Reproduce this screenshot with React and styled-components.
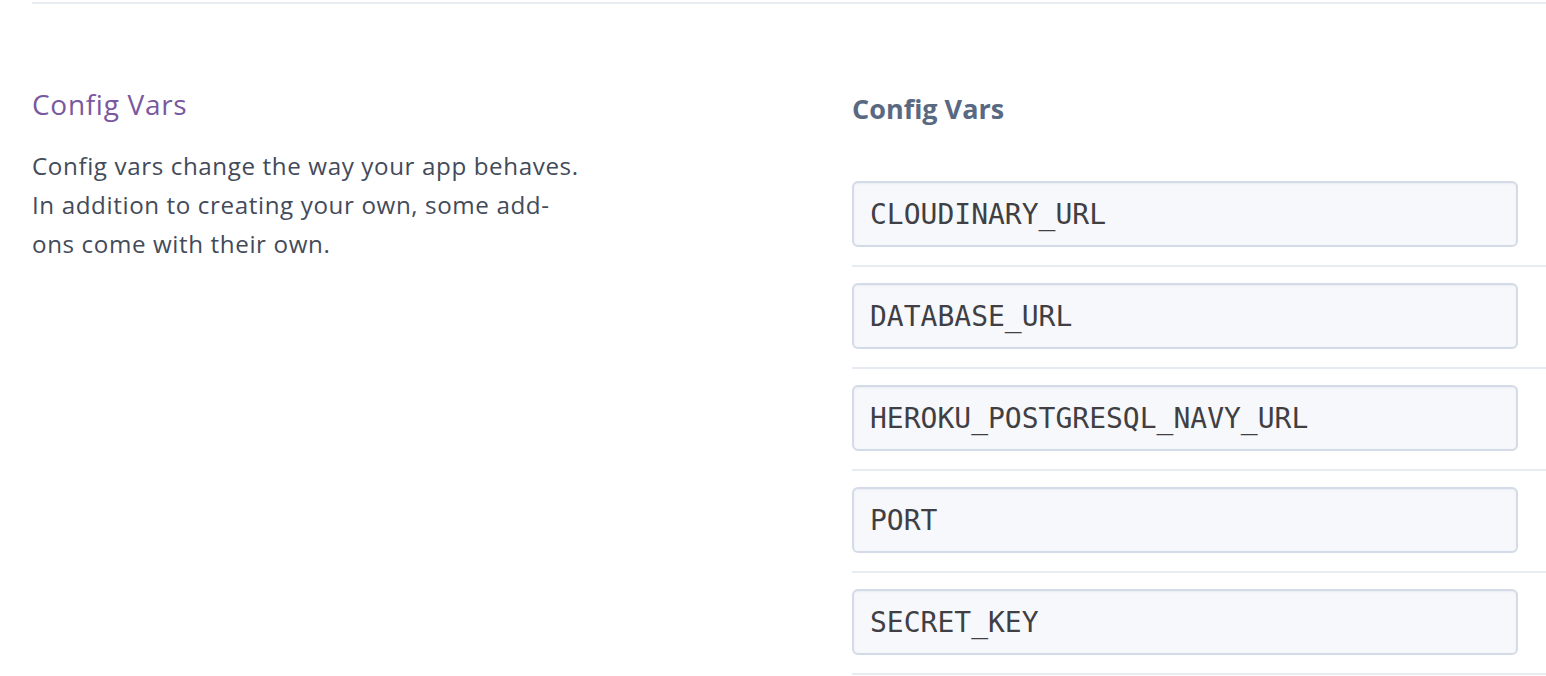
import React from "react";
import styled, { createGlobalStyle } from "styled-components";

const GlobalStyle = createGlobalStyle`
  html, body {
    margin: 0;
    padding: 0;
    background: #fff;
    overflow: hidden;
  }
  body {
    font-family: "Open Sans", "Liberation Sans", sans-serif;
  }
`;

const Page = styled.div`
  padding: 2px 0 0 32px;
  width: 1546px;
  box-sizing: border-box;
`;

const TopRule = styled.div`
  height: 2px;
  background: #e7ebf2;
`;

const Section = styled.section`
  display: grid;
  grid-template-columns: 820px 1fr;
  padding-top: 82px;
`;

const Intro = styled.div`
  .title {
    margin: 0;
    font-size: 28px;
    font-weight: 400;
    letter-spacing: 0.7px;
    line-height: 36px;
    color: #79589f;
  }
  .desc {
    margin: 24px 0 0;
    max-width: 560px;
    font-size: 24.2px;
    letter-spacing: 0.6px;
    line-height: 39px;
    color: #434b5a;
  }
`;

const Vars = styled.div`
  .heading {
    margin: 5px 0 0;
    font-size: 27px;
    font-weight: 700;
    line-height: 36px;
    color: #596981;
  }
`;

const List = styled.ul`
  list-style: none;
  margin: 54px 0 0;
  padding: 0;
`;

const Row = styled.li`
  padding: 0 28px 18px 0;
  border-bottom: 2px solid #e7ebf2;
  & + & {
    padding-top: 16px;
  }
`;

const KeyBox = styled.div`
  height: 66px;
  box-sizing: border-box;
  display: flex;
  align-items: center;
  padding: 0 16px;
  border: 2px solid #d3dae8;
  border-radius: 6px;
  background: #f7f8fb;
  box-shadow: inset 0 1px 2px rgba(89, 105, 129, 0.08);
  font-family: "DejaVu Sans Mono", "Liberation Mono", monospace;
  font-size: 28px;
  color: #3f3f44;
`;

const vars = [
  "CLOUDINARY_URL",
  "DATABASE_URL",
  "HEROKU_POSTGRESQL_NAVY_URL",
  "PORT",
  "SECRET_KEY",
];

export default function App() {
  return (
    <Page>
      <GlobalStyle />
      <TopRule />
      <Section>
        <Intro>
          <h2 className="title">Config Vars</h2>
          <p className="desc">
            Config vars change the way your app behaves. In addition to
            creating your own, some add-ons come with their own.
          </p>
        </Intro>
        <Vars>
          <h3 className="heading">Config Vars</h3>
          <List>
            {vars.map((name) => (
              <Row key={name}>
                <KeyBox>{name}</KeyBox>
              </Row>
            ))}
          </List>
        </Vars>
      </Section>
    </Page>
  );
}
